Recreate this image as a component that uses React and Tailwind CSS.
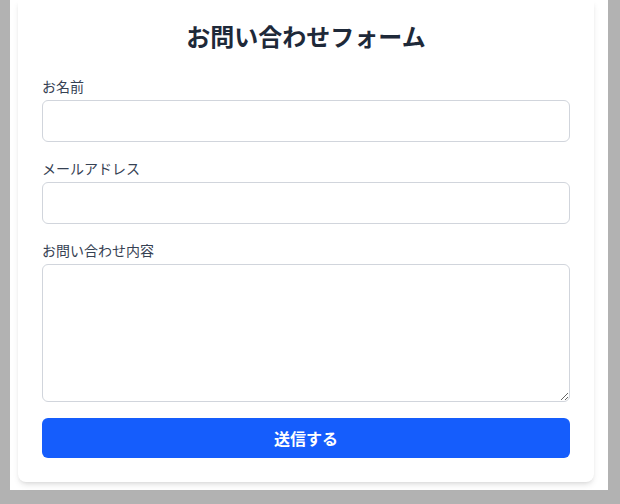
import React, { useState } from 'react';

const fieldClass =
  'block w-full rounded-md border border-gray-300 bg-white px-3 text-sm text-gray-900 outline-none focus:border-blue-500';

const App = () => {
  const [form, setForm] = useState({ name: '', email: '', message: '' });

  const update = (key) => (e) => setForm({ ...form, [key]: e.target.value });

  return (
    <div
      className="min-h-[504px] bg-[#b2b2b2] font-['Noto_Sans_CJK_JP','Noto_Sans',sans-serif]"
    >
      <div className="mx-[10px] w-[598px] bg-white pl-2 pr-[14px] pb-2">
        {/* Form card */}
        <form
          className="rounded-b-lg bg-white px-6 pt-5 pb-6 shadow-md"
          onSubmit={(e) => e.preventDefault()}
        >
          <h1 className="mb-6 text-center text-2xl leading-8 font-bold text-[#1e2939]">
            お問い合わせフォーム
          </h1>

          <div className="mb-4">
            <label className="mb-1 block text-sm leading-5 text-gray-700">お名前</label>
            <input type="text" value={form.name} onChange={update('name')} className={`${fieldClass} h-[42px]`} />
          </div>

          <div className="mb-4">
            <label className="mb-1 block text-sm leading-5 text-gray-700">メールアドレス</label>
            <input type="email" value={form.email} onChange={update('email')} className={`${fieldClass} h-[42px]`} />
          </div>

          <div className="mb-4">
            <label className="mb-1 block text-sm leading-5 text-gray-700">お問い合わせ内容</label>
            <textarea
              value={form.message}
              onChange={update('message')}
              className={`${fieldClass} h-[138px] py-2`}
            />
          </div>

          <button
            type="submit"
            className="block h-10 w-full rounded-md bg-[#155dfc] text-base font-bold text-white"
          >
            送信する
          </button>
        </form>
      </div>
    </div>
  );
};

export default App;
